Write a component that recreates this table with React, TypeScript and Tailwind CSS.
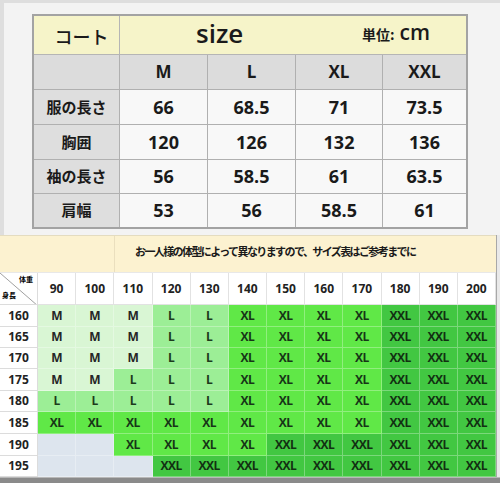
import React from "react";

const font = { fontFamily: '"Open Sans", "Noto Sans CJK JP", sans-serif' };
const jp = { fontFamily: '"Noto Sans CJK JP", "Open Sans", sans-serif' };

const top = [
  ["服の長さ", "66", "68.5", "71", "73.5"],
  ["胸囲", "120", "126", "132", "136"],
  ["袖の長さ", "56", "58.5", "61", "63.5"],
  ["肩幅", "53", "56", "58.5", "61"],
];
const topH = ["h-[35px]", "h-[35px]", "h-[34px]", "h-[33px]"];

const weights = ["90", "100", "110", "120", "130", "140", "150", "160", "170", "180", "190", "200"];
const chart: [string, string][] = [
  ["160", "M M M L L XL XL XL XL XXL XXL XXL"],
  ["165", "M M M L L XL XL XL XL XXL XXL XXL"],
  ["170", "M M M L L XL XL XL XL XXL XXL XXL"],
  ["175", "M M L L L XL XL XL XL XXL XXL XXL"],
  ["180", "L L L L L XL XL XL XL XXL XXL XXL"],
  ["185", "XL XL XL XL XL XL XL XL XL XXL XXL XXL"],
  ["190", "_ _ XL XL XL XL XXL XXL XXL XXL XXL XXL"],
  ["195", "_ _ _ XXL XXL XXL XXL XXL XXL XXL XXL XXL"],
];
const rowH = ["h-[22px]", "h-[21px]", "h-[21px]", "h-[22px]", "h-[21px]", "h-[22px]", "h-[22px]", "h-[21px]"];

const bg: Record<string, string> = {
  M: "bg-[#d9f6d4] text-[#262626]",
  L: "bg-[#9cee96] text-[#1c3a1c]",
  XL: "bg-[#60e847] text-[#173517]",
  XXL: "bg-[#42c742] text-[#123012]",
  _: "bg-[#dde5ee]",
};

export default function App() {
  return (
    <div className="w-[500px] h-[483px] overflow-hidden bg-[#e9e9e9]" style={font}>
      {/* top */}
      <div className="h-[235px] bg-[#f3f3f3] border-t-[3px] border-l-[4px] border-[#dedede] pt-[11px] pl-[28px]">
        <div className="w-[436px] border-2 border-[#a3a3a3] text-[#1a1a1a]">
          <div className="flex h-[39px] bg-[#f6f4c9] border-b border-[#b5b5b5]">
            <div className="w-[86px] border-r border-[#b5b5b5] flex items-center justify-center text-[18px] font-medium pl-[10px] pt-[2px]" style={jp}>
              コート
            </div>
            <div className="flex-1 flex items-center pl-[76px] pr-[36px]">
              <span className="text-[26px] font-semibold leading-none -mt-[4px]">size</span>
              <span className="ml-auto flex items-baseline -mt-[4px]">
                <span className="text-[14px] font-bold" style={jp}>単位:</span>
                <span className="text-[21px] font-semibold ml-[5px] leading-none">cm</span>
              </span>
            </div>
          </div>
          <div className="grid grid-cols-[86px_88px_88px_87px_83px] h-[35px] bg-[#dcdcdc] border-b border-[#b0b0b0] text-[17px] font-bold">
            <div className="border-r border-[#b0b0b0]" />
            {["M", "L", "XL", "XXL"].map((s, i) => (
              <div key={s} className={`flex items-center justify-center ${i < 3 ? "border-r border-[#b0b0b0]" : ""}`}>{s}</div>
            ))}
          </div>
          {top.map((r, ri) => (
            <div key={ri} className={`grid grid-cols-[86px_88px_88px_87px_83px] ${topH[ri]} ${ri < 3 ? "border-b border-[#b0b0b0]" : ""}`}>
              <div className="bg-[#dedede] border-r border-[#b0b0b0] flex items-center justify-center text-[15px] font-bold" style={jp}>{r[0]}</div>
              {r.slice(1).map((v, i) => (
                <div key={i} className={`bg-[#f8f8f8] flex items-center justify-center text-[18px] font-bold ${i < 3 ? "border-r border-[#b0b0b0]" : ""}`}>{v}</div>
              ))}
            </div>
          ))}
        </div>
      </div>

      {/* bottom */}
      <div className="w-[497px] border-r border-[#a8a8a8]">
        <div className="flex h-[37px] bg-[#fcf2d0] border-t border-[#e4dcc0]">
          <div className="w-[115px] border-r border-[#eadfbe]" />
          <div className="flex-1 pl-[20px] pt-[7px] text-[11px] font-bold tracking-[-1.6px] text-[#1a1a1a]" style={jp}>
            お一人様の体型によって異なりますので、サイズ表はご参考までに
          </div>
        </div>
        <div className="grid grid-cols-[38px_repeat(12,1fr)] h-[33px] bg-white border-t border-[#e8e8e8]">
          <div className="relative border-r border-b border-[#dcdcdc] overflow-hidden">
            <svg className="absolute inset-0" width="38" height="33">
              <line x1="0" y1="0" x2="38" y2="33" stroke="#888" strokeWidth="0.8" />
            </svg>
            <span className="absolute right-[4px] top-[3px] text-[7px] font-bold leading-none" style={jp}>体重</span>
            <span className="absolute left-[2px] bottom-[5px] text-[7px] font-bold leading-none" style={jp}>身長</span>
          </div>
          {weights.map((w) => (
            <div key={w} className="border-r border-b border-[#e2e2e2] flex items-center justify-center text-[12px] font-bold text-[#222]">{w}</div>
          ))}
        </div>
        {chart.map(([h, s], ri) => (
          <div key={h} className={`grid grid-cols-[38px_repeat(12,1fr)] ${rowH[ri]}`}>
            <div className="bg-white border-r border-b border-[#dcdcdc] flex items-center justify-center text-[12px] font-bold text-[#222]">{h}</div>
            {s.split(" ").map((c, i) => (
              <div key={i} className={`${bg[c]} border-r border-b border-white/30 flex items-center justify-center text-[12px] font-bold tracking-[-0.5px]`}>
                {c === "_" ? "" : c}
              </div>
            ))}
          </div>
        ))}
      </div>
      <div className="h-[6px] bg-[#8a8a8a] border-t border-[#b8b8b8]" />
    </div>
  );
}
